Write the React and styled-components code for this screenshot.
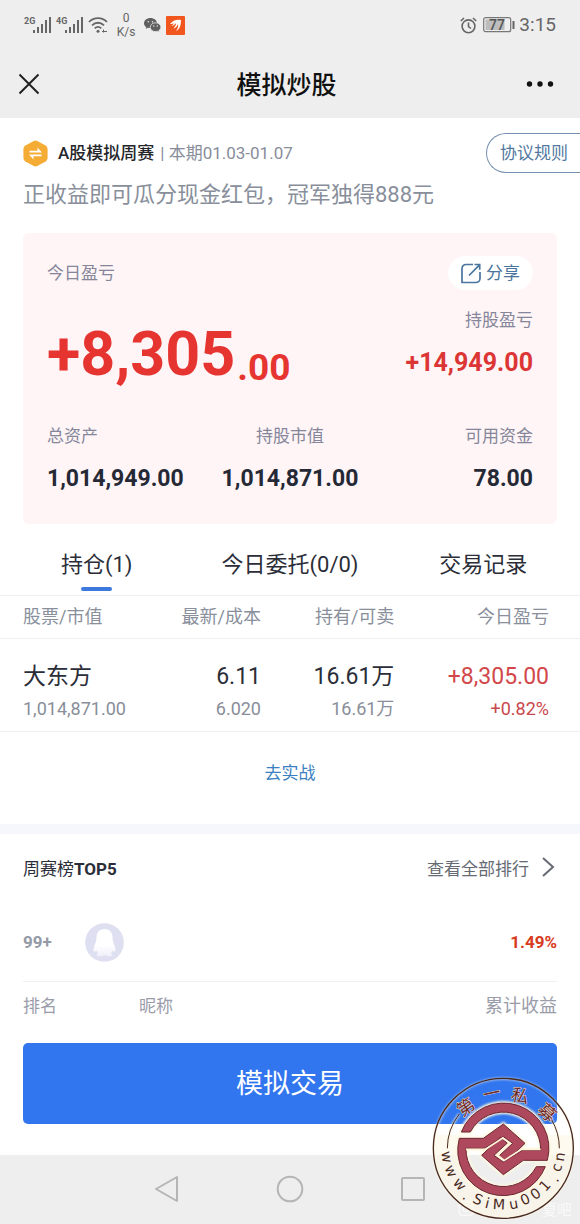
import React from 'react';
import styled, { createGlobalStyle } from 'styled-components';

const Global = createGlobalStyle`
  * { box-sizing: border-box; }
  body { margin: 0; background: #fff; color: #2b2e38; font-family: Roboto, "Noto Sans CJK SC", sans-serif; }
  button { border: 0; padding: 0; margin: 0; background: none; font: inherit; color: inherit; cursor: pointer; }
  a { color: inherit; text-decoration: none; }
  svg { display: block; flex: none; }
  h1, h2, p { margin: 0; font-weight: 400; }
`;

const Page = styled.div`
  position: relative;
  min-height: 100vh;
  display: flex;
  flex-direction: column;
  overflow: hidden;
`;

const StatusBar = styled.div`
  display: flex;
  align-items: center;
  justify-content: space-between;
  height: 50px;
  padding: 0 24px;
  background: #eee;
  color: #666;
`;

const StatusGroup = styled.div`
  display: flex;
  align-items: center;
  gap: ${(p) => p.$gap}px;
`;

const NetSpeed = styled.div`
  display: flex;
  flex-direction: column;
  align-items: center;
  width: 20px;
  font-size: 12px;
  line-height: 14px;
`;

const Clock = styled.span`
  font-size: 19px;
  line-height: 24px;
`;

const NavBar = styled.header`
  display: flex;
  align-items: center;
  justify-content: space-between;
  height: 68px;
  padding: 0 26px 0 15px;
  background: #eee;
  color: #111;
`;

const NavTitle = styled.h1`
  padding: 3px 0 0 4px;
  font-size: 25px;
  line-height: 36px;
  && { font-weight: 500; }
`;

const NavButton = styled.button`
  display: flex;
  width: 28px;
  height: 40px;
  align-items: center;
  justify-content: center;
`;

const Intro = styled.section`
  display: flex;
  align-items: flex-start;
  justify-content: space-between;
  height: 115px;
  padding: 16px 0 0 23px;
`;

const IntroRow = styled.div`
  display: flex;
  align-items: center;
  height: 38px;
  font-size: 17px;
  line-height: 24px;
`;

const IntroName = styled.strong`
  margin: 0 6px 0 10px;
  font-weight: 500;
  color: #25262b;
`;

const Muted = styled.span`
  color: #888d9a;
`;

const Slogan = styled.p`
  padding-top: 7px;
  font-size: 22px;
  line-height: 32px;
  color: #888f9b;
  white-space: nowrap;
`;

const RulesLink = styled.a`
  flex: none;
  height: 40px;
  margin: -1px 0 0 -60px;
  padding: 0 12px 0 13px;
  border: 1px solid #7890b0;
  border-right: 0;
  border-radius: 20px 0 0 20px;
  font-size: 17px;
  line-height: 38px;
  color: #52789f;
`;

const Card = styled.section`
  display: flex;
  flex-direction: column;
  margin: 0 23px;
  padding: 23px 24px 31px;
  border-radius: 6px;
  background: #fff5f6;
`;

const CardRow = styled.div`
  display: flex;
  align-items: center;
  justify-content: space-between;
`;

const Totals = styled.div`
  display: grid;
  grid-template-columns: 1fr auto 1fr;
`;

const Label = styled.span`
  font-size: 17px;
  line-height: 26px;
  color: #85869a;
`;

const ShareButton = styled.button`
  && {
    display: flex;
    align-items: center;
    gap: 5px;
    height: 34px;
    padding: 0 13px;
    border-radius: 17px;
    background: #fff;
    font-size: 17px;
    line-height: 32px;
    color: #4a759e;
  }
`;

const ProfitRow = styled.div`
  display: flex;
  justify-content: space-between;
  height: 133px;
  padding-top: 17px;
`;

const BigProfit = styled.div`
  display: flex;
  align-items: flex-start;
  gap: 2px;
  padding-top: 7px;
  font-weight: 700;
  color: #e63430;
`;

const BigWhole = styled.span`
  font-size: 61px;
  line-height: 80px;
`;

const BigCents = styled.span`
  padding-top: 14px;
  font-size: 37px;
  line-height: 80px;
`;

const Stack = styled.div`
  display: flex;
  flex-direction: column;
  align-items: ${(p) => p.$align};
  gap: 16px;
`;

const Amount = styled.strong`
  font-size: ${(p) => (p.$up ? 25 : 23)}px;
  line-height: 28px;
  font-weight: 700;
  color: ${(p) => (p.$up ? '#dc3535' : '#252936')};
`;

const Tabs = styled.nav`
  display: flex;
  height: 72px;
  border-bottom: 1px solid #eeeff2;
`;

const Tab = styled.button`
  && {
    display: flex;
    flex: 1;
    flex-direction: column;
    align-items: center;
    padding-top: 23px;
    font-size: 22px;
    line-height: 36px;
    white-space: nowrap;
  }
  &::after {
    content: '';
    width: 31px;
    height: 4px;
    margin-top: 4px;
    border-radius: 2px;
    background: ${(p) => (p.$active ? '#3d78dd' : 'transparent')};
  }
`;

const Holdings = styled.table`
  width: 100%;
  border-collapse: collapse;
  table-layout: fixed;
  th, td {
    padding: 0;
    text-align: right;
    white-space: nowrap;
  }
  th:first-child, td:first-child { padding-left: 23px; text-align: left; }
  th:last-child, td:last-child { padding-right: 31px; }
  tr { border-bottom: 1px solid #eeeff2; }
`;

const HeadCell = styled.th`
  height: 42px;
  font-size: 18px;
  font-weight: 400;
  line-height: 26px;
  color: #89909c;
`;

const Cell = styled.td`
  height: 93px;
  color: ${(p) => (p.$up ? '#d2484a' : '#2b2e38')};
`;

const CellMain = styled.div`
  padding-top: 14px;
  font-size: 23px;
  line-height: 34px;
`;

const CellSub = styled.div`
  font-size: 18px;
  line-height: 30px;
  color: ${(p) => (p.$up ? '#c9484c' : '#898e99')};
`;

const RealLink = styled.a`
  align-self: center;
  padding: 28px 0 38px;
  font-size: 17px;
  line-height: 26px;
  color: #3a7fc0;
`;

const Divider = styled.div`
  height: 10px;
  background: #f6f6fd;
`;

const Board = styled.section`
  display: flex;
  flex-direction: column;
  padding: 0 23px;
`;

const BoardHead = styled.div`
  display: flex;
  align-items: center;
  justify-content: space-between;
  height: 70px;
  padding-bottom: 3px;
  font-size: 17px;
`;

const BoardTitle = styled.h2`
  font-size: 17px;
  b { font-weight: 700; }
`;

const AllLink = styled.a`
  display: flex;
  align-items: center;
  gap: 12px;
  padding-right: 2px;
  color: #666a72;
`;

const BoardRow = styled.div`
  display: grid;
  grid-template-columns: ${(p) => p.$cols};
  align-items: center;
  height: ${(p) => p.$height}px;
  border-bottom: ${(p) => (p.$line ? '1px solid #f0f0f4' : '0')};
  font-size: 17px;
  color: #9a9ca9;
`;

const Rank = styled.strong`
  font-weight: 700;
  color: #959aa8;
`;

const Rate = styled.strong`
  font-weight: 700;
  text-align: right;
  color: #d73b22;
`;

const RightText = styled.span`
  font-size: 18px;
  text-align: right;
`;

const TradeButton = styled.button`
  && {
    height: 81px;
    margin: 16px 23px 31px;
    padding-bottom: 4px;
    border-radius: 5px;
    background: #3276ef;
    font-size: 27px;
    color: #fff;
  }
`;

const SystemBar = styled.nav`
  flex: 1;
  display: flex;
  align-items: center;
  justify-content: center;
  gap: 95px;
  min-height: 69px;
  background: #eee;
`;

const Stamp = styled.div`
  position: absolute;
  right: 0;
  bottom: 0;
  pointer-events: none;
`;

const Signal = ({ type }) => (
  <svg width="28" height="18" viewBox="0 0 28 18" fill="#666">
    <text x="0" y="8" fontSize="9" fontWeight="700" fontFamily="Roboto, sans-serif">{type}</text>
    <rect x="9" y="14" width="2" height="3" />
    <rect x="13" y="11" width="2" height="6" />
    <rect x="17" y="8" width="2" height="9" />
    <rect x="21" y="4" width="2" height="13" />
    <rect x="25" y="1" width="2" height="16" />
  </svg>
);

const Wifi = () => (
  <svg width="20" height="18" viewBox="0 0 20 18" fill="none" stroke="#666" strokeWidth="1.8">
    <path d="M1 6C6 .8 14 .8 19 6M4 9.300c3.500-3.400 8.500-3.400 12 0M6.700 12.300c2-1.800 4.600-1.800 6.600 0" />
    <circle cx="10" cy="15.300" r="1.500" fill="#666" stroke="none" />
    <path d="M14 15.500h5M15.500 13.500v3" strokeWidth="1" />
  </svg>
);

const WeChat = () => (
  <svg width="17" height="15" viewBox="0 0 17 15">
    <path d="M6.500 0C2.900 0 0 2.300 0 5.200c0 1.600.9 3 2.300 3.900L1.700 11l2.200-1.200c.8.300 1.700.4 2.600.4C10 10.200 13 8 13 5.200S10 0 6.500 0z" fill="#5f5f5f" />
    <path d="M11.500 4.800c-3 0-5.300 2-5.300 4.400s2.300 4.400 5.300 4.400c.8 0 1.500-.1 2.100-.4l1.800 1-.5-1.700c1.200-.8 2-2 2-3.300 0-2.400-2.400-4.400-5.400-4.400z" fill="#5f5f5f" stroke="#eee" strokeWidth=".8" />
    <g fill="#eee"><circle cx="4.300" cy="3.800" r=".8" /><circle cx="8.500" cy="3.800" r=".8" /><circle cx="9.800" cy="8" r=".7" /><circle cx="13.200" cy="8" r=".7" /></g>
  </svg>
);

const AppBadge = () => (
  <svg width="19" height="19" viewBox="0 0 19 19">
    <rect width="19" height="19" rx="1" fill="#f0561d" />
    <path d="M4 8C7 4 11 3 15 4c0 5-1 9-5 11 2-3 2.500-5 2-7-1 2.500-2.500 4-4.500 4.500C9 10.500 10 9 10.200 7 8.500 9 7 10 5 10c1.500-.7 2.500-1.500 3-2.700C6.700 8 5.500 8.300 4 8z" fill="#fff" />
  </svg>
);

const Alarm = () => (
  <svg width="17" height="17" viewBox="0 0 17 17" fill="none" stroke="#666" strokeWidth="1.600">
    <circle cx="8.500" cy="9.300" r="6.400" />
    <path d="M8.500 5.500v4l2.500 2M.8 4 4 1M16.200 4 13 1" />
  </svg>
);

const Battery = () => (
  <svg width="32" height="16" viewBox="0 0 32 16">
    <rect x=".7" y=".7" width="27" height="14" rx="2" fill="none" stroke="#777" strokeWidth="1.200" />
    <rect x="2.500" y="2.500" width="19" height="10.500" fill="#bdbdbd" />
    <rect x="29.500" y="4" width="2" height="8" fill="#666" />
    <text x="14" y="13" fontSize="14" fontWeight="500" textAnchor="middle" fontFamily="Roboto, sans-serif" fill="#555">77</text>
  </svg>
);

const Hexagon = () => (
  <svg width="25" height="27" viewBox="0 0 25 27">
    <path d="M10.700 1a4 4 0 0 1 3.600 0l8.300 4.600a4 4 0 0 1 2 3.400v9a4 4 0 0 1-2 3.400L14.300 26a4 4 0 0 1-3.600 0l-8.300-4.600a4 4 0 0 1-2-3.400V9a4 4 0 0 1 2-3.400z" fill="#f5ac35" />
    <path d="M6.500 10.800h8V7.500l4.500 5H6.500zM18.500 16.200h-8v3.300L6 14.500h12.500z" fill="#fff" />
  </svg>
);

const ShareIcon = () => (
  <svg width="20" height="21" viewBox="0 0 20 21" fill="none" stroke="#4a759e" strokeWidth="1.700">
    <path d="M12 1.500H5a4 4 0 0 0-4 4v14h14a4 4 0 0 0 4-4V9M8 12.500 18.500 1.800M13.500 1.500h5.200v5.200" />
  </svg>
);

const Avatar = () => (
  <svg width="39" height="39" viewBox="0 0 39 39">
    <defs>
      <linearGradient id="bird" x1="0" y1="0" x2="0" y2="1">
        <stop offset=".6" stopColor="#fff" />
        <stop offset="1" stopColor="#eff0fa" />
      </linearGradient>
    </defs>
    <circle cx="19.500" cy="19.500" r="19.300" fill="#dedff0" />
    <path d="M19.500 6c-5 0-8 3.500-8 8.500 0 3-.8 5-2 8-1.300 3.500-1.200 6 0 6.300.7 0 1.500-.8 2-1.300.3 1 .8 2 1.600 2.800-2.500 1.200-1.800 2.900 1.200 2.900 2 0 4-.4 5.200-1.300 1.200.9 3.200 1.300 5.200 1.300 3 0 3.700-1.700 1.200-2.900.8-.8 1.300-1.800 1.600-2.800.5.500 1.300 1.300 2 1.300 1.200-.3 1.300-2.800 0-6.300-1.200-3-2-5-2-8 0-5-3-8.500-8-8.500z" fill="url(#bird)" />
  </svg>
);

const sealTop = [
  ['第', 138, 142, -35], ['一', 215, 101, -12], ['私', 300, 108, 12], ['募', 381, 158, 42],
];

const sealBottom = [
  ['w', 79, 291, 82], ['w', 92, 334, 66], ['w', 118, 374, 49], ['.', 138, 408, 38],
  ['S', 173, 420, 24], ['i', 202, 431, 14], ['M', 237, 435, 3], ['u', 281, 433, -10],
  ['0', 316, 420, -24], ['0', 348, 403, -36], ['1', 376, 378, -48], ['.', 404, 356, -58],
  ['c', 411, 323, -72], ['n', 420, 291, -82],
];

const sealHalf = 'M118 235H190L250 192 315 250 259 304 238 287 278 250 250 230 194 265H138A112 112 0 0 0 349 320H376A136 136 0 0 1 118 235z';

const Seal = () => (
  <svg width="160" height="164" viewBox="0 0 480 492">
    <defs>
      <filter id="halo" x="-20%" y="-20%" width="140%" height="140%">
        <feGaussianBlur stdDeviation="3" />
      </filter>
    </defs>
    <g fill="none" stroke="#fff" strokeWidth="5" strokeOpacity=".6">
      <rect x="118" y="426" width="40" height="40" rx="10" />
      <circle cx="138" cy="446" r="9" />
    </g>
    <text x="455" y="464" fontSize="44" textAnchor="end" fontFamily="'Noto Sans CJK SC', sans-serif" fill="#fff" fillOpacity=".7">夏吧</text>
    <path d="M45 225A209 209 0 1 0 455 225H380A136 136 0 1 1 120 225z" fill="#fdf8e6" fillOpacity=".65" />
    <g fill="none" stroke="#fff8df" filter="url(#halo)">
      <circle cx="250" cy="265" r="209" strokeWidth="7" strokeOpacity=".6" />
      <path d="M82 265a168 168 0 0 1 36-103M418 265a168 168 0 0 0-24-87" strokeWidth="8" strokeOpacity=".7" />
      <path d={sealHalf} strokeWidth="12" />
      <path d={sealHalf} strokeWidth="12" transform="rotate(180 250 268)" />
    </g>
    <circle cx="250" cy="265" r="210" fill="none" stroke="#49291f" strokeWidth="4" />
    <path d="M82 265a168 168 0 0 1 36-103M418 265a168 168 0 0 0-24-87" fill="none" stroke="#49291f" strokeWidth="3" />
    <g fill="#ad485d" stroke="#6b2635" strokeWidth="3">
      <path d={sealHalf} />
      <path d={sealHalf} transform="rotate(180 250 268)" />
    </g>
    <path d="M138 268H196L248 234 270 250 232 285 254 302M362 268H304L252 302" fill="none" stroke="#fff3d8" strokeWidth="5" />
    <g fill="#6b2a2c" stroke="#f5dccb" strokeWidth="3" paintOrder="stroke" fontSize="52" fontFamily="'Noto Sans CJK SC', sans-serif" textAnchor="middle">
      {sealTop.map(([c, x, y, a]) => (
        <text key={c} transform={`translate(${x} ${y}) rotate(${a})`} y="18">{c}</text>
      ))}
    </g>
    <g fill="#49291f" stroke="#fff8e8" strokeWidth="2" paintOrder="stroke" fontSize="43" fontFamily="'DejaVu Sans', sans-serif" textAnchor="middle">
      {sealBottom.map(([c, x, y, a]) => (
        <text key={x} transform={`translate(${x} ${y}) rotate(${a})`} y="13">{c}</text>
      ))}
    </g>
  </svg>
);

const holdings = [
  { name: '大东方', value: '1,014,871.00', price: '6.11', cost: '6.020', held: '16.61万', free: '16.61万', gain: '+8,305.00', rate: '+0.82%' },
];

export default function App() {
  return (
    <Page>
      <Global />
      <StatusBar>
        <StatusGroup $gap={8}>
          <StatusGroup $gap={4}>
            <Signal type="2G" />
            <Signal type="4G" />
            <Wifi />
          </StatusGroup>
          <NetSpeed><span>0</span><span>K/s</span></NetSpeed>
          <StatusGroup $gap={5}><WeChat /><AppBadge /></StatusGroup>
        </StatusGroup>
        <StatusGroup $gap={4}>
          <StatusGroup $gap={6}>
            <Alarm />
            <Battery />
          </StatusGroup>
          <Clock>3:15</Clock>
        </StatusGroup>
      </StatusBar>
      <NavBar>
        <NavButton aria-label="关闭">
          <svg width="22" height="22" viewBox="0 0 22 22" stroke="#222" strokeWidth="2"><path d="M1.500 1.500l19 19M20.500 1.500l-19 19" /></svg>
        </NavButton>
        <NavTitle>模拟炒股</NavTitle>
        <NavButton aria-label="更多">
          <svg width="28" height="6" viewBox="0 0 28 6" fill="#111"><circle cx="3.500" cy="3" r="2.700" /><circle cx="14" cy="3" r="2.700" /><circle cx="24.500" cy="3" r="2.700" /></svg>
        </NavButton>
      </NavBar>

      <Intro>
        <div>
          <IntroRow>
            <Hexagon />
            <IntroName>A股模拟周赛</IntroName>
            <Muted>| 本期01.03-01.07</Muted>
          </IntroRow>
          <Slogan>正收益即可瓜分现金红包，冠军独得888元</Slogan>
        </div>
        <RulesLink href="#rules">协议规则</RulesLink>
      </Intro>

      <Card>
        <CardRow>
          <Label>今日盈亏</Label>
          <ShareButton><ShareIcon />分享</ShareButton>
        </CardRow>
        <ProfitRow>
          <BigProfit><BigWhole>+8,305</BigWhole><BigCents>.00</BigCents></BigProfit>
          <Stack $align="flex-end">
            <Label>持股盈亏</Label>
            <Amount $up>+14,949.00</Amount>
          </Stack>
        </ProfitRow>
        <Totals>
          <Stack $align="flex-start"><Label>总资产</Label><Amount>1,014,949.00</Amount></Stack>
          <Stack $align="center"><Label>持股市值</Label><Amount>1,014,871.00</Amount></Stack>
          <Stack $align="flex-end"><Label>可用资金</Label><Amount>78.00</Amount></Stack>
        </Totals>
      </Card>

      <Tabs>
        <Tab $active>持仓(1)</Tab>
        <Tab>今日委托(0/0)</Tab>
        <Tab>交易记录</Tab>
      </Tabs>
      <Holdings>
        <colgroup><col width="23%" /><col width="22%" /><col width="23%" /><col width="32%" /></colgroup>
        <thead>
          <tr>
            <HeadCell>股票/市值</HeadCell>
            <HeadCell>最新/成本</HeadCell>
            <HeadCell>持有/可卖</HeadCell>
            <HeadCell>今日盈亏</HeadCell>
          </tr>
        </thead>
        <tbody>
          {holdings.map((h) => (
            <tr key={h.name}>
              <Cell><CellMain>{h.name}</CellMain><CellSub>{h.value}</CellSub></Cell>
              <Cell><CellMain>{h.price}</CellMain><CellSub>{h.cost}</CellSub></Cell>
              <Cell><CellMain>{h.held}</CellMain><CellSub>{h.free}</CellSub></Cell>
              <Cell $up><CellMain>{h.gain}</CellMain><CellSub $up>{h.rate}</CellSub></Cell>
            </tr>
          ))}
        </tbody>
      </Holdings>
      <RealLink href="#real">去实战</RealLink>
      <Divider />

      <Board>
        <BoardHead>
          <BoardTitle>周赛榜<b>TOP5</b></BoardTitle>
          <AllLink href="#all">
            查看全部排行
            <svg width="14" height="20" viewBox="0 0 14 20" fill="none" stroke="#666a72" strokeWidth="2"><path d="M2 1l10 9-10 9" /></svg>
          </AllLink>
        </BoardHead>
        <BoardRow $cols="62px 1fr auto" $height={78} $line>
          <Rank>99+</Rank>
          <Avatar />
          <Rate>1.49%</Rate>
        </BoardRow>
        <BoardRow $cols="116px 1fr auto" $height={45}>
          <span>排名</span>
          <span>昵称</span>
          <RightText>累计收益</RightText>
        </BoardRow>
      </Board>
      <TradeButton>模拟交易</TradeButton>

      <SystemBar>
        <NavButton aria-label="返回">
          <svg width="26" height="28" viewBox="0 0 26 28" fill="none" stroke="#b5b5b5" strokeWidth="2" strokeLinejoin="round"><path d="M2 14 23 2v24z" /></svg>
        </NavButton>
        <NavButton aria-label="主页">
          <svg width="28" height="28" viewBox="0 0 28 28" fill="none" stroke="#b5b5b5" strokeWidth="2"><circle cx="14" cy="14" r="12.300" /></svg>
        </NavButton>
        <NavButton aria-label="最近任务">
          <svg width="26" height="26" viewBox="0 0 26 26" fill="none" stroke="#b5b5b5" strokeWidth="2"><rect x="2" y="2" width="22" height="22" rx="1" /></svg>
        </NavButton>
      </SystemBar>
      <Stamp><Seal /></Stamp>
    </Page>
  );
}
